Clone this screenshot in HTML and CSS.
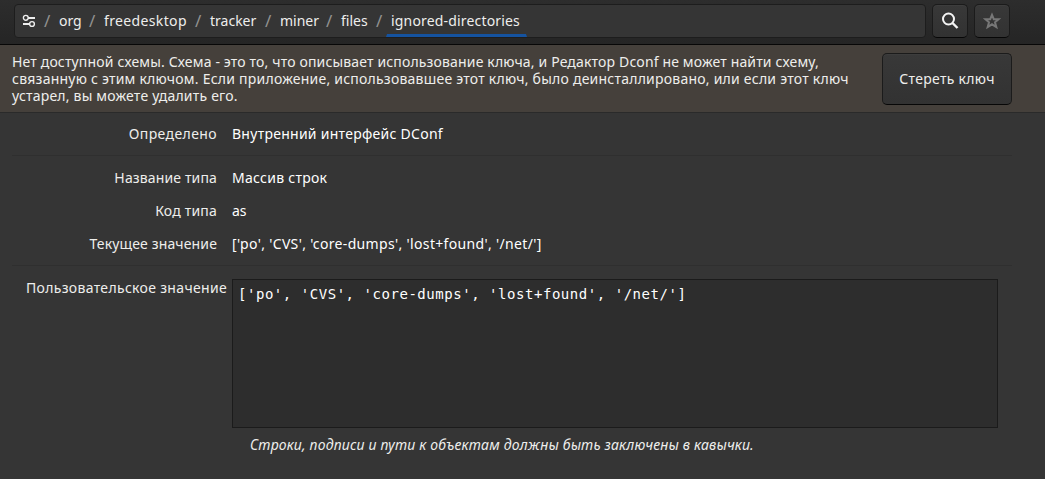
FILE: index.html
```
<!DOCTYPE html>
<html lang="ru">
<head>
<meta charset="utf-8">
<title>dconf</title>
<link rel="stylesheet" href="styles.css">
</head>
<body>
<header class="headerbar">
  <nav class="pathbar">
    <svg class="root-icon" width="14" height="14" viewBox="0 0 14 14" fill="none" stroke="#eee"><circle cx="3.8" cy="3.8" r="2.4" stroke-width="1.4"/><path d="M6 4H13M1 10H8" stroke-width="2"/><circle cx="10" cy="10" r="2.4" stroke-width="1.4" fill="#353535"/></svg>
    <span class="slash">/</span><span class="crumb c-org">org</span>
    <span class="slash">/</span><span class="crumb c-free">freedesktop</span>
    <span class="slash">/</span><span class="crumb c-track">tracker</span>
    <span class="slash">/</span><span class="crumb c-miner">miner</span>
    <span class="slash">/</span><span class="crumb c-files">files</span>
    <span class="slash">/</span><span class="crumb c-active">ignored-directories</span>
  </nav>
  <button class="icon-button"><svg width="18" height="18" viewBox="0 0 18 18" fill="none" stroke="#f4f4f4" stroke-width="2"><circle cx="7.5" cy="7" r="5.5"/><path d="M11.5 11L16.5 16" stroke-width="2.4"/></svg></button>
  <button class="icon-button"><svg width="18" height="18" viewBox="0 0 18 18" fill="none" stroke="#777" stroke-width="2"><path d="M9 2.8L10.8 7.2H15.6L12 10.3L13.3 15L9 12.3L4.7 15L6 10.3L2.4 7.2H7.2Z"/></svg></button>
</header>
<section class="infobar">
  <p class="message"><span class="m1">Нет доступной схемы. Схема - это то, что описывает использование ключа, и Редактор Dconf не может найти схему,</span><span class="m2">связанную с этим ключом. Если приложение, использовавшее этот ключ, было деинсталлировано, или если этот ключ</span><span class="m3">устарел, вы можете удалить его.</span></p>
  <button class="erase">Стереть ключ</button>
</section>
<main class="details">
  <div class="row first"><span class="label l1">Определено</span><span class="value v1">Внутренний интерфейс DConf</span></div>
  <div class="group">
    <div class="row"><span class="label l2">Название типа</span><span class="value v2">Массив строк</span></div>
    <div class="row"><span class="label l3">Код типа</span><span class="value v3">as</span></div>
    <div class="row"><span class="label l4">Текущее значение</span><span class="value v4">['po', 'CVS', 'core-dumps', 'lost+found', '/net/']</span></div>
  </div>
  <div class="editor">
    <span class="custom">Пользовательское значение</span>
    <div class="field">['po', 'CVS', 'core-dumps', 'lost+found', '/net/']</div>
  </div>
  <p class="hint">Строки, подписи и пути к объектам должны быть заключены в кавычки.</p>
</main>
</body>
</html>
```
FILE: styles.css
```
* { box-sizing: border-box; }
body { margin: 0; height: 479px; overflow: hidden; background: #353535; color: #eeeeec; font: 14px/17px "Noto Sans", sans-serif; white-space: nowrap; }
p { margin: 0; }
button { font: inherit; color: #eeeeec; border: 1px solid #1b1b1b; border-bottom-color: #070707; border-radius: 5px; background: linear-gradient(#383838, #323232); padding: 0; display: flex; align-items: center; justify-content: center; box-shadow: inset 0 1px #3d3d3d; }
.headerbar { height: 45px; display: flex; gap: 6px; padding: 4px 0 0 14px; background: linear-gradient(#2d2d2d, #252525); border-bottom: 1px solid #070707; }
.pathbar { width: 912px; height: 34px; border: 1px solid #1d1d1d; border-radius: 4px; background: #353535; display: flex; align-items: center; padding-left: 7px; line-height: 32px; }
.root-icon { width: 14px; margin-right: 8px; }
.slash { width: 15px; color: #919190; font-size: 17px; }
.c-org { width: 30px; }
.c-free { width: 91px; letter-spacing: .36px; }
.c-track { width: 55px; }
.c-miner { width: 46px; }
.c-files { width: 35px; }
.c-active { height: 32px; width: 141px; margin-left: -5px; padding-left: 4px; border-bottom: 3px solid #1553a0; border-right: 1px solid transparent; border-left: 1px solid transparent; letter-spacing: .17px; }
.icon-button { width: 36px; height: 34px; }
.infobar { height: 68px; display: flex; justify-content: space-between; padding: 8px 33px 0 12px; background: #45403b; border-bottom: 1px solid #2a2a2a; }
.message span { display: block; }
.m1 { letter-spacing: .155px; }
.m2 { letter-spacing: .23px; }
.m3 { letter-spacing: .2px; }
.erase { width: 130px; height: 52px; padding-bottom: 2px; letter-spacing: .3px; }
.row { display: grid; grid-template-columns: 205px 1fr; column-gap: 15px; height: 33px; line-height: 33px; }
.label { text-align: right; }
.value { color: #fff; }
.l1 { letter-spacing: .4px; }
.l2, .l4 { letter-spacing: .14px; }
.l3 { letter-spacing: .2px; }
.v1, .v2 { letter-spacing: .27px; }
.v4 { letter-spacing: .34px; }
.details { padding: 4px 33px 0 12px; }
.first { height: 38px; }
.group { height: 111px; padding-top: 5px; border-top: 1px solid #2f2f2f; border-bottom: 1px solid #2f2f2f; margin-bottom: 13px; }
.editor { display: flex; }
.custom { width: 220px; padding-left: 14px; letter-spacing: .32px; }
.field { width: 766px; height: 149px; padding: 6px 5px; background: #2d2d2d; border: 1px solid #1b1b1b; font: 14px/17px "DejaVu Sans Mono", monospace; letter-spacing: .54px; color: #fff; }
.hint { padding: 8px 0 0 238px; font-style: italic; letter-spacing: .185px; }
```
